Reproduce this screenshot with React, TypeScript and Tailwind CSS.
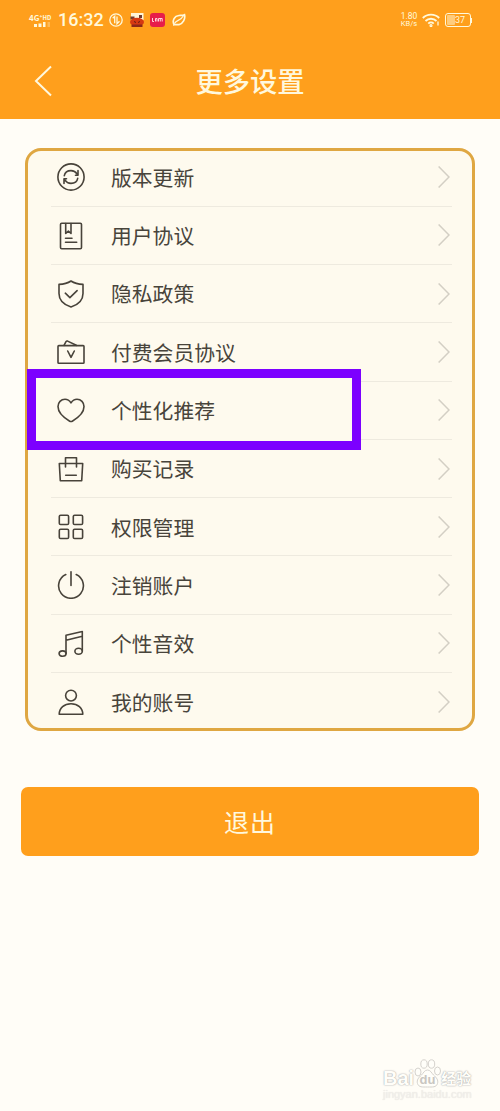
import type { ReactNode } from "react";

const items: { label: string; icon: ReactNode }[] = [
  {
    label: "版本更新",
    icon: (
      <>
        <circle cx="14" cy="14" r="13.1" />
        <path d="M7.300 12.600c.6-3.200 3.400-5 6.700-5 2.500 0 4.600 1.100 6 3.300M21 7.600v4.600h-2.500" />
        <path d="M20.700 15.400c-.6 3.200-3.400 5-6.700 5-2.500 0-4.600-1.100-6-3.300M7 20.400v-4.600h2.500" />
      </>
    ),
  },
  {
    label: "用户协议",
    icon: (
      <>
        <rect x="3.500" y="1.300" width="21" height="25.400" rx="1.200" />
        <path d="M8.700 1.500v10l2.700-2.400 2.600 2.400v-10M8.500 16.200h6.500M8.500 20.200h11.200" />
      </>
    ),
  },
  {
    label: "隐私政策",
    icon: (
      <>
        <path d="M14 1c3.500 2.400 7.600 3.300 12 3.400v9.100c0 6.700-5 11.300-12 13.500-7-2.200-12-6.800-12-13.500V4.400C6.400 4.300 10.500 3.400 14 1z" />
        <path d="M8.300 13.200l4.600 4.400 7.200-7" />
      </>
    ),
  },
  {
    label: "付费会员协议",
    icon: (
      <>
        <rect x="1" y="7.600" width="26" height="17.700" rx=".8" />
        <path d="M7 7.400l2-3.700c.4-.7.900-.8 1.600-.6l8.700 4.200M10.700 13l3.300 6.300 3.300-6.300" />
      </>
    ),
  },
  {
    label: "个性化推荐",
    icon: (
      <path d="M14 6.900C12.500 4.600 10.500 3.300 8 3.300c-4 0-7 3-7 7.300 0 6.200 6 11.300 11.700 14.600.9.500 1.700.5 2.600 0C21 21.900 27 16.800 27 10.600c0-4.300-3-7.300-7-7.300-2.500 0-4.500 1.300-6 3.600z" />
    ),
  },
  {
    label: "购买记录",
    icon: (
      <path d="M2.300 8.500h23.400l-1 17.200H3.300l-1-17.200zM8.500 12V2.700h11V12M8.700 20.300h10.600" />
    ),
  },
  {
    label: "权限管理",
    icon: (
      <>
        <rect x="2.300" y="2.200" width="9.300" height="9.300" rx="1.300" />
        <rect x="16.300" y="2.200" width="9.300" height="9.300" rx="1.300" />
        <rect x="2.300" y="16.200" width="9.300" height="9.300" rx="1.300" />
        <rect x="16.300" y="16.200" width="9.300" height="9.300" rx="1.300" />
      </>
    ),
  },
  {
    label: "注销账户",
    icon: <path d="M14 .8v13.600M8.800 3.600a12.400 12.400 0 1 0 10.400 0" />,
  },
  {
    label: "个性音效",
    icon: (
      <>
        <path d="M9 23.500V5.200l16.300-3.700V21M9 10.300l16.300-4" />
        <ellipse cx="5.600" cy="23.600" rx="3.500" ry="2.700" />
        <ellipse cx="21.600" cy="21.200" rx="3.700" ry="3" />
      </>
    ),
  },
  {
    label: "我的账号",
    icon: (
      <>
        <circle cx="14" cy="7.600" r="5.400" />
        <path d="M2.200 26.300c0-6.600 5.100-10.600 11.800-10.600s11.800 4 11.800 10.600H2.200z" />
      </>
    ),
  },
];

function StatusBar() {
  return (
    <div className="flex h-10 items-center pl-[29px] pr-[28px] text-[#fff9dc]">
      <div className="mr-[3px] w-[26px] text-[8px] font-bold leading-[7px]">
        <p className="whitespace-nowrap">
          4G<sup className="text-[5px]">+</sup>
          <span className="align-top text-[6px]">HD</span>
        </p>
        <svg viewBox="0 0 16 5" className="ml-[5px] mt-px h-[5px] w-4" fill="currentColor">
          <path d="M0 2h3v3H0zM4.500 1.500h3V5h-3zM9 0h2.500v5H9z" />
          <path d="M13.500 0H16v5h-2.500z" opacity=".3" />
        </svg>
      </div>
      <span className="w-[46px] whitespace-nowrap font-['Roboto',sans-serif] text-[18px] font-medium leading-none">
        16:32
      </span>
      <svg viewBox="0 0 14 14" className="ml-[5px] size-[14px]" fill="none" stroke="currentColor" strokeWidth="1.300">
        <circle cx="7" cy="7" r="6.200" />
        <path d="M3.700 5.200l2-2v7M8 3.500v7.300l2.500-2.500" />
      </svg>
      <svg viewBox="0 0 14 14" className="ml-[7px] size-[14px]">
        <path d="M1 0h12.500v7H1z" fill="#fff5d8" />
        <path d="M9 2h3v3H9zM.5 3.500h4v3h-4z" fill="#713c30" />
        <ellipse cx="7" cy="9" rx="7" ry="4.300" fill="#d63912" />
        <path d="M1.500 11.500h11V14h-11z" fill="#8d2719" />
        <path d="M4 8.500l2 1M10 8.500l-2 1" stroke="#611d14" />
      </svg>
      <div className="ml-[6px] flex h-[14px] w-[15px] items-center justify-center rounded-[3px] bg-[#e71d4a]">
        <svg viewBox="0 0 11 4" className="h-1 w-[11px]" fill="none" stroke="#ffd4dc">
          <path d="M.5 0v3.500H2M3.500 3.500V.5H5v3M6.500 3.500v-3h3.700v3M8.300.500v3" />
        </svg>
      </div>
      <svg viewBox="0 0 14 14" className="ml-[7px] size-[14px]" fill="none" stroke="currentColor" strokeWidth="1.700">
        <path d="M2 11.500C0 7.500 2.500 3 7 2.500c2.300-.2 3.700.3 5.500-.7 1 4-1.500 9-5.500 9.800-2 .4-3.300-.5-5 .2z" />
        <path d="M2.500 10.500C5 6 8 9 12 2" strokeWidth="1.200" />
      </svg>

      <div className="ml-auto w-[18px] whitespace-nowrap text-center font-['Roboto',sans-serif] text-[8.500px] leading-[7px]">
        <p>1.80</p>
        <p className="text-[7.500px]">KB/s</p>
      </div>
      <svg viewBox="0 0 18 14" className="ml-[4px] h-[14px] w-[18px]" fill="none" stroke="currentColor" strokeWidth="1.900">
        <path d="M.8 5c4.500-4.500 11.900-4.500 16.400 0M3.500 8c3-3 8-3 11 0M6.300 10.600c1.500-1.500 3.900-1.500 5.400 0" />
        <circle cx="9" cy="12.600" r=".6" />
        <path d="M16 8.500v4" strokeWidth="1.300" />
      </svg>
      <div className="ml-[5px] flex h-[14px] w-[26px] items-center rounded-[3px] border border-current p-px">
        <div className="h-full w-[8px] rounded-[1px] bg-current opacity-50" />
        <span className="font-['Roboto',sans-serif] text-[9px] leading-none">37</span>
      </div>
      <div className="h-[5px] w-px bg-current" />
    </div>
  );
}

function SettingsCard() {
  return (
    <section className="relative mx-[25px] mt-[29px] h-[583px] rounded-[16px] border-[3px] border-[#dfa742] bg-[#fefaee]">
      <ul className="-my-[3px] pl-[23px] pr-[20px] pt-[.400px]">
        {items.map((item) => (
          <li
            key={item.label}
            className="flex h-[58.300px] items-center border-b border-[#eeeadf] pl-[6px] last:border-transparent"
          >
            <svg
              viewBox="0 0 28 28"
              className="mt-[.500px] size-7 shrink-0"
              fill="none"
              stroke="#48433a"
              strokeWidth="1.600"
              strokeLinecap="round"
              strokeLinejoin="round"
            >
              {item.icon}
            </svg>
            <span className="ml-[26px] mt-[.500px] flex-1 text-[20.800px] leading-none text-[#48443b]">{item.label}</span>
            <svg viewBox="0 0 12 22" className="mr-[2px] h-[22px] w-3" fill="none" stroke="#d3cfc4" strokeWidth="1.500">
              <path d="M.6.500L11 11 .6 21.500" />
            </svg>
          </li>
        ))}
      </ul>
      {/* highlight frame, the inset shadow hides the row dividers inside it */}
      <div className="absolute -left-[1px] top-[218px] h-[80.500px] w-[334px] border-[9.500px] border-[#7c00ff] shadow-[inset_0_0_0_4px_#fefaee]" />
    </section>
  );
}

function Watermark() {
  return (
    <div className="absolute bottom-[11px] right-[27px] w-[90px] font-['Liberation_Sans','Noto_Sans_CJK_SC',sans-serif] text-[#fffef9]">
      <div className="flex h-[32px] items-end [text-shadow:0_0_1px_#aaa,0_0_2px_#bbb]">
        <span className="text-[20px] font-bold leading-[19px]">Bai</span>
        <svg viewBox="0 0 27 29" className="h-[29px] w-[27px] shrink-0" fill="#fffef9" stroke="#d5d2cd">
          <ellipse cx="4" cy="13" rx="3" ry="4" />
          <ellipse cx="10" cy="5" rx="3.200" ry="4.200" />
          <ellipse cx="17.500" cy="5" rx="3.200" ry="4.200" />
          <ellipse cx="23.500" cy="12" rx="3" ry="4" />
          <path d="M13.500 11c3 0 4 3 6 5 3 2.700 5 5 4 8.500-1.200 4-5 3.500-10 3.500s-8.800.500-10-3.500c-1-3.500 1-5.800 4-8.500 2-2 3-5 6-5z" />
          <text
            x="13.500"
            y="25"
            textAnchor="middle"
            fontSize="13"
            fontWeight="bold"
            fill="#c9c6c1"
            stroke="none"
            className="[text-shadow:none]"
          >
            du
          </text>
        </svg>
        <span className="whitespace-nowrap text-[15px] font-bold leading-[19px]">经验</span>
      </div>
      <p className="text-[11px] leading-[12px] text-[#f3f0ea] [text-shadow:0_0_1px_#ddd]">jingyan.baidu.com</p>
    </div>
  );
}

export default function App() {
  return (
    <div className="relative flex h-[1111px] w-[500px] flex-col overflow-hidden bg-[#fffdf7] font-['Noto_Sans_CJK_SC',sans-serif]">
      <header className="h-[119px] bg-[#ff9f1c]">
        <StatusBar />
        <div className="grid h-[79px] grid-cols-[1fr_auto_1fr] items-center text-[#fff8de]">
          <svg viewBox="0 0 18 32" className="ml-[34px] mt-[2px] h-8 w-[18px]" fill="none" stroke="currentColor" strokeWidth="2">
            <path d="M17 1.500L2 16l15 14.500" />
          </svg>
          <h1 className="mt-[2px] text-[27.300px] font-medium leading-none">更多设置</h1>
        </div>
      </header>

      <SettingsCard />

      <button className="mx-[21px] mt-[56px] h-[69px] rounded-[7px] bg-[#ff9f1c] text-[25px] leading-none tracking-[1px] text-[#fff8de]">
        退出
      </button>

      <Watermark />
    </div>
  );
}
